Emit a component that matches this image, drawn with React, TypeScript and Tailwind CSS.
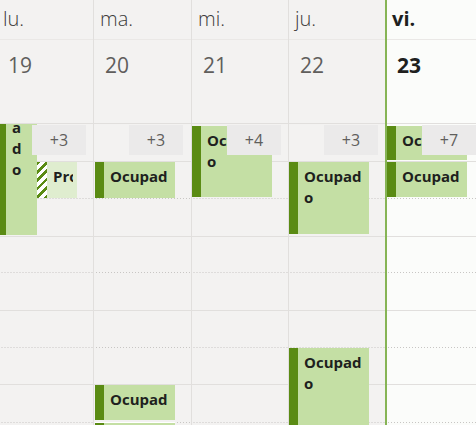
import React from "react";

type Ev = {
  top: number;
  height: number;
  left: number;
  width: number;
  text: string;
  tentative?: boolean;
  narrow?: boolean;
  gapTop?: boolean;
};

type Day = {
  name: string;
  date: string;
  today?: boolean;
  more: string;
  events: Ev[];
  colClass: string;
};

const days: Day[] = [
  {
    name: "lu.",
    date: "19",
    more: "+3",
    colClass: "w-[97px] ml-[-4px] border-l border-[#e1dfdd]",
    events: [
      { top: -95, height: 206, left: 0, width: 40, text: "Ocupado", narrow: true },
      { top: 38, height: 36, left: 40, width: 40, text: "Provisional", tentative: true },
    ],
  },
  {
    name: "ma.",
    date: "20",
    more: "+3",
    colClass: "w-[98px] border-l border-[#e1dfdd]",
    events: [
      { top: 38, height: 36, left: 1, width: 80, text: "Ocupado" },
      { top: 261, height: 35, left: 1, width: 80, text: "Ocupado" },
      { top: 298, height: 40, left: 1, width: 80, text: "Ocupado", gapTop: true },
    ],
  },
  {
    name: "mi.",
    date: "21",
    more: "+4",
    colClass: "w-[97px] border-l border-[#e1dfdd]",
    events: [{ top: 2, height: 71, left: 0, width: 80, text: "Ocupado" }],
  },
  {
    name: "ju.",
    date: "22",
    more: "+3",
    colClass: "w-[97px] border-l border-[#e1dfdd]",
    events: [
      { top: 38, height: 72, left: 0, width: 80, text: "Ocupado" },
      { top: 224, height: 90, left: 0, width: 80, text: "Ocupado" },
    ],
  },
  {
    name: "vi.",
    date: "23",
    today: true,
    more: "+7",
    colClass: "flex-1 border-l-2 border-[#86b455] bg-[#fbfcfa]",
    events: [
      { top: 2, height: 34, left: 0, width: 80, text: "Ocupado" },
      { top: 38, height: 35, left: 0, width: 80, text: "Ocupado" },
    ],
  },
];

const rows: { h: string; solid: boolean }[] = [
  { h: "h-[38px]", solid: true },
  { h: "h-[37px]", solid: false },
  { h: "h-[38px]", solid: true },
  { h: "h-[36px]", solid: false },
  { h: "h-[38px]", solid: true },
  { h: "h-[37px]", solid: false },
  { h: "h-[37px]", solid: true },
  { h: "h-[38px]", solid: false },
];

function clipHeight(h: number) {
  const lines = Math.max(1, Math.floor((h - 4) / 21));
  return 4 + lines * 21;
}

function EventBox({ ev }: { ev: Ev }) {
  const style = { top: ev.top, height: ev.height, left: ev.left, width: ev.width };
  if (ev.tentative) {
    return (
      <div className="absolute flex overflow-hidden bg-[#dfedcf]" style={style}>
        <div className="w-[10px] shrink-0 bg-[repeating-linear-gradient(135deg,#5a8b13_0px,#5a8b13_2.5px,#ffffff_2.5px,#ffffff_6px)]" />
        <div className="min-w-0 flex-1 overflow-hidden whitespace-nowrap pl-[6px] pr-[4px] pt-1 text-[15px] font-bold leading-[21px] text-[#201f1e]">
          <div className="overflow-hidden">{ev.text}</div>
        </div>
      </div>
    );
  }
  return (
    <div
      className={
        "absolute flex overflow-hidden bg-[#c4dfa4] " + (ev.gapTop ? "border-t border-white" : "")
      }
      style={style}
    >
      <div className="w-[9px] shrink-0 bg-[#5a8b13]" />
      {ev.narrow ? (
        <div className="ml-[6px] w-[14px] shrink-0 break-all pt-1 text-[15px] font-bold leading-[21px] text-[#201f1e]">
          {ev.text}
        </div>
      ) : (
        <div
          className="min-w-0 flex-1 self-start overflow-hidden break-all pl-[6px] pr-[4px] pt-1 text-[15px] font-bold leading-[21px] text-[#201f1e]"
          style={{ maxHeight: clipHeight(ev.height) }}
        >
          {ev.text}
        </div>
      )}
    </div>
  );
}

function Column({ day }: { day: Day }) {
  return (
    <div className={"flex shrink-0 flex-col " + day.colClass}>
      <div className="h-[40px] border-b border-[#eae8e6]">
        {day.today ? (
          <div className="pl-[5px] pt-[5px] text-[20px] font-bold leading-[28px] text-[#201f1e]">
            {day.name}
          </div>
        ) : (
          <div className="pl-[6px] pt-[5px] text-[20px] font-light leading-[28px] text-[#3b3a39]">
            {day.name}
          </div>
        )}
      </div>
      <div className="h-[84px] border-b border-[#e1dfdd]">
        {day.today ? (
          <div className="pl-[10px] pt-[10px] text-[21px] font-bold leading-[30px] text-[#201f1e]">
            {day.date}
          </div>
        ) : (
          <div className="pl-[11px] pt-[10px] text-[21px] font-normal leading-[30px] text-[#605e5c]">
            {day.date}
          </div>
        )}
      </div>
      <div className="relative h-[301px] overflow-hidden">
        <div className="flex flex-col">
          {rows.map((r, i) =>
            r.solid ? (
              <div key={i} className={r.h + " border-b border-[#e1dfdd]"} />
            ) : (
              <div
                key={i}
                className={
                  r.h +
                  " bg-[linear-gradient(to_right,#c8c6c4_1px,transparent_1px)] bg-[length:3px_1px] bg-bottom bg-repeat-x"
                }
              />
            )
          )}
        </div>
        {day.events.map((ev, i) => (
          <EventBox key={i} ev={ev} />
        ))}
        <div className="absolute left-[35px] top-[1px] flex h-[30px] w-[54px] items-center justify-center bg-[#ebeaea] text-[16px] leading-none text-[#605e5c]">
          {day.more}
        </div>
      </div>
    </div>
  );
}

export default function App() {
  return (
    <div className="relative h-[425px] w-[476px] overflow-hidden bg-[#f3f2f1] font-['Open_Sans','Noto_Sans',sans-serif]">
      <div className="flex h-full">
        {days.map((d) => (
          <Column key={d.name} day={d} />
        ))}
      </div>
    </div>
  );
}
